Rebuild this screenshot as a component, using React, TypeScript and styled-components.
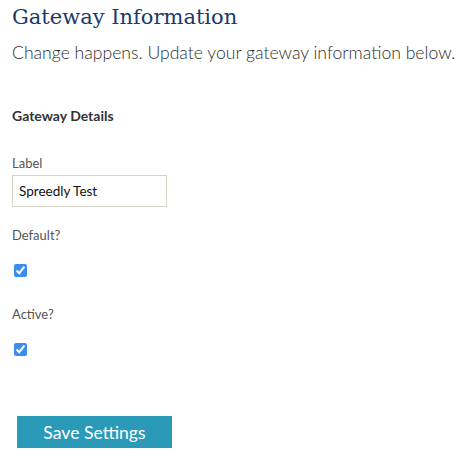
import styled, { createGlobalStyle } from "styled-components"

const Global = createGlobalStyle`
body {
    margin: 0;
    background: #fff;
    font-family: Lato, "Open Sans", sans-serif;
}
`

const Page = styled.div`
padding: 2px 12px 0;
`

const Title = styled.h1`
margin: 0;
font-family: "DejaVu Serif", "Liberation Serif", serif;
font-weight: 400;
font-size: 21px;
line-height: 30px;
color: #1a3a68;
`

const Lead = styled.p`
margin: 9px 0 0;
font-size: 17.6px;
line-height: 24px;
font-weight: 300;
white-space: nowrap;
color: #2e2e2e;
`

const Section = styled.h3`
margin: 42px 0 30px;
font-size: 14px;
line-height: 18px;
font-weight: 700;
color: #333;
`

const Field = styled.div<{ $gap?: number }>`
margin-top: ${p => p.$gap ?? 0}px;
`

const FieldLabel = styled.label`
display: block;
font-size: 13px;
line-height: 16px;
color: #555;
`

const TextInput = styled.input`
display: block;
box-sizing: border-box;
margin-top: 4px;
width: 155px;
height: 32px;
padding: 0 6px;
border: 1px solid #d4d4c8;
border-radius: 0;
font-family: Lato, sans-serif;
font-size: 13.5px;
color: #111;
outline: none;
`

const CheckWrap = styled.div`
padding: 21px 0 9px;
height: 13px;
`

const Check = styled.input`
display: block;
margin: 0 0 0 2px;
width: 13px;
height: 13px;
accent-color: #3a8ef2;
`

const Actions = styled.div`
margin-top: 51px;
padding-left: 5px;
`

const SaveButton = styled.button`
width: 155px;
height: 32px;
border: none;
border-radius: 0;
background: #2b9ab8;
color: #fff;
font-family: Lato, sans-serif;
font-size: 17.6px;
cursor: pointer;
`

export default function App() {
    return (
        <Page>
            <Global />
            <Title>Gateway Information</Title>
            <Lead>Change happens. Update your gateway information below.</Lead>
            <Section>Gateway Details</Section>
            <Field>
                <FieldLabel>Label</FieldLabel>
                <TextInput type="text" defaultValue="Spreedly Test" />
            </Field>
            <Field $gap={20}>
                <FieldLabel>Default?</FieldLabel>
                <CheckWrap><Check type="checkbox" defaultChecked /></CheckWrap>
            </Field>
            <Field $gap={20}>
                <FieldLabel>Active?</FieldLabel>
                <CheckWrap><Check type="checkbox" defaultChecked /></CheckWrap>
            </Field>
            <Actions>
                <SaveButton>Save Settings</SaveButton>
            </Actions>
        </Page>
    )
}
